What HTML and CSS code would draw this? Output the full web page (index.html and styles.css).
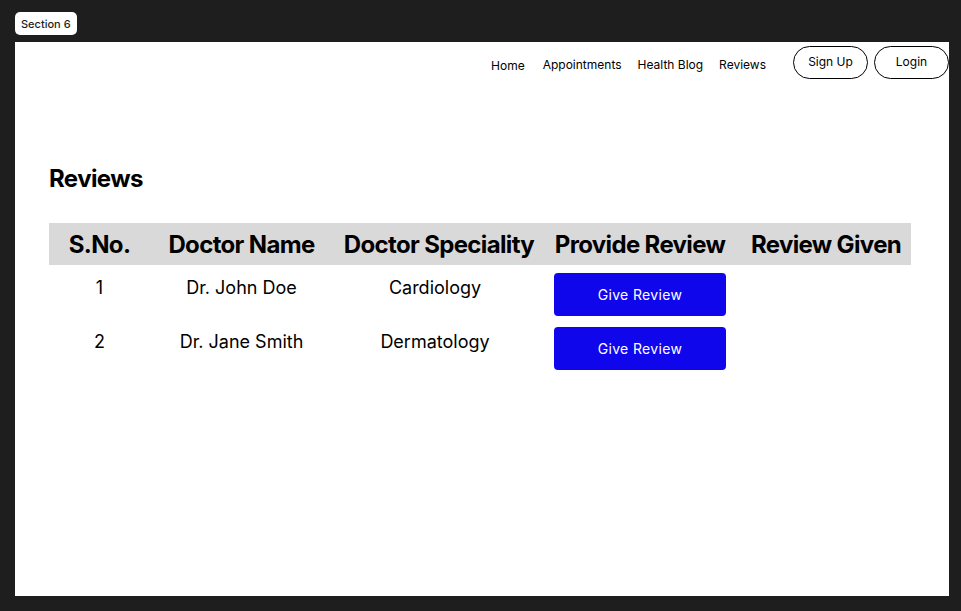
FILE: index.html
```html
<!DOCTYPE html>
<html lang="en">
<head>
<meta charset="utf-8">
<title>Section 6</title>
<link rel="stylesheet" href="styles.css">
</head>
<body>
<div class="canvas">
  <div class="label">Section 6</div>
  <div class="frame">
    <header class="nav">
      <a class="nav-link home">Home</a>
      <a class="nav-link">Appointments</a>
      <a class="nav-link">Health Blog</a>
      <a class="nav-link">Reviews</a>
      <div class="auth">
        <button class="pill">Sign Up</button>
        <button class="pill">Login</button>
      </div>
    </header>
    <main class="content">
      <h1 class="title">Reviews</h1>
      <div class="table">
        <div class="row head">
          <div class="cell">S.No.</div>
          <div class="cell">Doctor Name</div>
          <div class="cell">Doctor Speciality</div>
          <div class="cell">Provide Review</div>
          <div class="cell last">Review Given</div>
        </div>
        <div class="row body">
          <div class="cell">1</div>
          <div class="cell">Dr. John Doe</div>
          <div class="cell spec">Cardiology</div>
          <div class="cell btn-cell"><button class="give">Give Review</button></div>
          <div class="cell"></div>
        </div>
        <div class="row body">
          <div class="cell">2</div>
          <div class="cell">Dr. Jane Smith</div>
          <div class="cell spec">Dermatology</div>
          <div class="cell btn-cell"><button class="give">Give Review</button></div>
          <div class="cell"></div>
        </div>
      </div>
    </main>
  </div>
</div>
</body>
</html>
```
FILE: styles.css
```css
* { box-sizing: border-box; }
html, body { margin: 0; padding: 0; }
body {
  background: #1e1e1e;
  font-family: Inter, "Noto Sans", sans-serif;
  color: #000;
  width: 961px;
  height: 611px;
  overflow: hidden;
}
.canvas {
  padding: 12px 0 0 15px;
}
.label {
  display: flex;
  align-items: center;
  width: fit-content;
  height: 23px;
  padding: 0 6px;
  background: #fff;
  border-radius: 5px;
  font-size: 11px;
  font-weight: 500;
  color: #1e1e1e;
}
.frame {
  margin-top: 7px;
  width: 934px;
  height: 554px;
  background: #fff;
  overflow: hidden;
}
.nav {
  display: flex;
  justify-content: flex-end;
  align-items: center;
  padding: 4px 0 0 0;
  height: 37px;
}
.nav-link {
  font-size: 12px;
  margin-right: 16px;
  line-height: 15px;
  padding-top: 3px;
}
.nav-link.home { padding-top: 5px; margin-right: 18px; }
.auth {
  display: flex;
  gap: 6px;
  margin-left: 11px;
}
.pill {
  width: 75px;
  height: 33px;
  border: 1px solid #000;
  border-radius: 17px;
  background: #fff;
  font-family: Inter, "Noto Sans", sans-serif;
  font-size: 12px;
  color: #000;
  padding: 0 0 2px 0;
}
.content {
  padding: 0 0 0 34px;
}
.title {
  margin: 85px 0 0 0;
  font-size: 24px;
  font-weight: 700;
  letter-spacing: -0.6px;
  line-height: 29px;
}
.table {
  margin-top: 30px;
  width: 862px;
}
.row {
  display: grid;
  grid-template-columns: 101px 183px 212px 190px 176px;
}
.row.head {
  background: #d9d9d9;
  height: 42px;
  align-items: center;
}
.head .cell {
  font-size: 24px;
  font-weight: 700;
  letter-spacing: -0.65px;
  text-align: center;
  line-height: 29px;
  white-space: nowrap;
}
.head .cell.last { padding-left: 6px; }
.row.body {
  height: 54px;
  padding-top: 8px;
}
.body .cell {
  font-size: 18px;
  line-height: 22px;
  text-align: center;
  padding-top: 4px;
}
.body .cell.spec { padding-right: 8px; }
.body .btn-cell {
  padding-top: 0;
  text-align: left;
  padding-left: 9px;
}
.give {
  width: 172px;
  height: 43px;
  background: #1006ec;
  color: #fff;
  border: 0;
  border-radius: 4px;
  font-family: Inter, "Noto Sans", sans-serif;
  font-size: 14px;
  letter-spacing: 0.35px;
}
```
